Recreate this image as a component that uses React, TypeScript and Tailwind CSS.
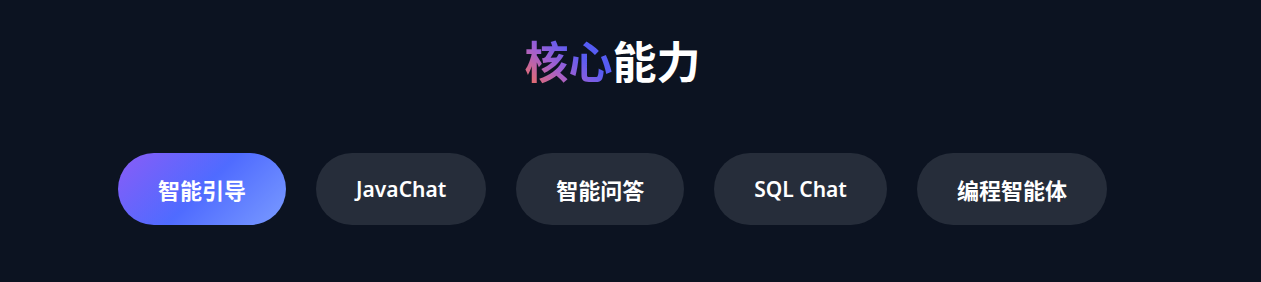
import React from "react";

const tabs = [
  { t: "智能引导", cjk: true },
  { t: "JavaChat", cjk: false },
  { t: "智能问答", cjk: true },
  { t: "SQL Chat", cjk: false },
  { t: "编程智能体", cjk: true },
];

export default function App() {
  return (
    <div
      className="w-full h-[282px] bg-[#0c1321] flex flex-col items-center pr-[36px]"
      style={{ fontFamily: '"Noto Sans", "Noto Sans CJK SC", sans-serif' }}
    >
      <h2 className="mt-[30px] text-[44px] leading-[64px] font-bold text-white">
        <span className="bg-[linear-gradient(40deg,#ff7048_0%,#a05fd2_38%,#5a5cf2_62%,#4d5cf5_100%)] bg-clip-text text-transparent">
          核心
        </span>
        能力
      </h2>
      <div className="mt-[59px] flex justify-center gap-[30px]">
        {tabs.map(({ t, cjk }, i) => (
          <button
            key={t}
            style={{
              fontFamily: cjk
                ? '"Noto Sans CJK SC", sans-serif'
                : '"Noto Sans", "Noto Sans CJK SC", sans-serif',
            }}
            className={
              (cjk ? "text-[22px] font-bold leading-[30px] " : "text-[21px] font-semibold leading-[30px] ") +
              (i === 0
                ? "h-[72px] px-10 rounded-full text-white bg-[linear-gradient(135deg,#8a5cf7_0%,#4f6bff_50%,#7a9bff_100%)]"
                : "h-[72px] px-10 rounded-full text-white bg-[#262d3a]")
            }
          >
            {t}
          </button>
        ))}
      </div>
    </div>
  );
}
